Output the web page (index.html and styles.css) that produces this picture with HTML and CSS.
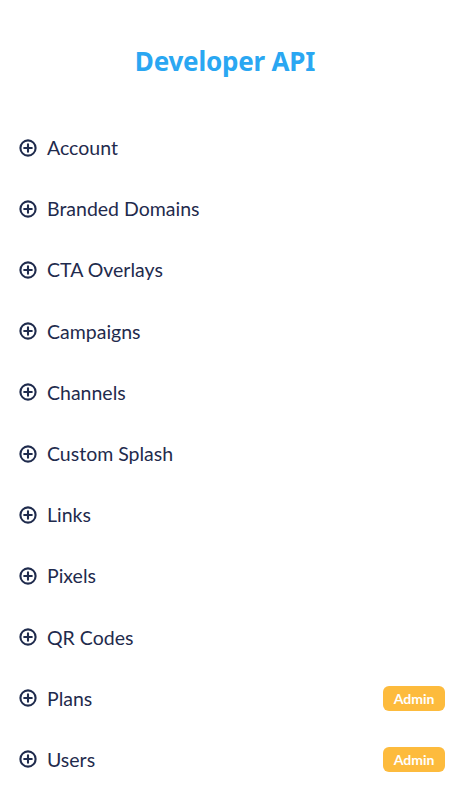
FILE: index.html
```html
<!DOCTYPE html>
<html>
<head>
<meta charset="utf-8">
<link rel="stylesheet" href="styles.css">
</head>
<body>
<div class="page">
  <h1 class="title">Developer API</h1>
  <ul class="menu">
    <li class="item"><svg class="icon" viewBox="0 0 18 18"><circle cx="9" cy="9" r="7.6"/><path d="M9 5.2v7.6M5.2 9h7.6"/></svg><span class="label">Account</span></li>
    <li class="item"><svg class="icon" viewBox="0 0 18 18"><circle cx="9" cy="9" r="7.6"/><path d="M9 5.2v7.6M5.2 9h7.6"/></svg><span class="label">Branded Domains</span></li>
    <li class="item"><svg class="icon" viewBox="0 0 18 18"><circle cx="9" cy="9" r="7.6"/><path d="M9 5.2v7.6M5.2 9h7.6"/></svg><span class="label">CTA Overlays</span></li>
    <li class="item"><svg class="icon" viewBox="0 0 18 18"><circle cx="9" cy="9" r="7.6"/><path d="M9 5.2v7.6M5.2 9h7.6"/></svg><span class="label">Campaigns</span></li>
    <li class="item"><svg class="icon" viewBox="0 0 18 18"><circle cx="9" cy="9" r="7.6"/><path d="M9 5.2v7.6M5.2 9h7.6"/></svg><span class="label">Channels</span></li>
    <li class="item"><svg class="icon" viewBox="0 0 18 18"><circle cx="9" cy="9" r="7.6"/><path d="M9 5.2v7.6M5.2 9h7.6"/></svg><span class="label">Custom Splash</span></li>
    <li class="item"><svg class="icon" viewBox="0 0 18 18"><circle cx="9" cy="9" r="7.6"/><path d="M9 5.2v7.6M5.2 9h7.6"/></svg><span class="label">Links</span></li>
    <li class="item"><svg class="icon" viewBox="0 0 18 18"><circle cx="9" cy="9" r="7.6"/><path d="M9 5.2v7.6M5.2 9h7.6"/></svg><span class="label">Pixels</span></li>
    <li class="item"><svg class="icon" viewBox="0 0 18 18"><circle cx="9" cy="9" r="7.6"/><path d="M9 5.2v7.6M5.2 9h7.6"/></svg><span class="label">QR Codes</span></li>
    <li class="item"><svg class="icon" viewBox="0 0 18 18"><circle cx="9" cy="9" r="7.6"/><path d="M9 5.2v7.6M5.2 9h7.6"/></svg><span class="label">Plans</span><span class="badge">Admin</span></li>
    <li class="item"><svg class="icon" viewBox="0 0 18 18"><circle cx="9" cy="9" r="7.6"/><path d="M9 5.2v7.6M5.2 9h7.6"/></svg><span class="label">Users</span><span class="badge">Admin</span></li>
  </ul>
</div>
</body>
</html>
```
FILE: styles.css
```css
* { box-sizing: border-box; }
html, body { margin: 0; padding: 0; background: #fff; }
body { font-family: Lato, "Noto Sans", sans-serif; }
.page { width: 450px; padding: 43px 5px 0 19px; }
.title {
  margin: 0 0 0 -14px;
  text-align: center;
  font-family: "Noto Sans", sans-serif;
  font-weight: 700;
  font-size: 26px;
  line-height: 36px;
  color: #2aa7f2;
  letter-spacing: -0.2px;
}
.menu { list-style: none; margin: 38px 0 0; padding: 0; }
.item {
  display: flex;
  align-items: center;
  height: 61.2px;
  color: #1f2b4d;
}
.icon {
  width: 18px; height: 18px;
  fill: none;
  stroke: #1f2b4d;
  stroke-width: 2.1;
  stroke-linecap: round;
  flex: none;
}
.label { margin-left: 10px; font-size: 19.5px; flex: 1; }
.badge {
  background: #fdbb3d;
  color: #fff;
  font-weight: 700;
  font-size: 14px;
  height: 25px;
  width: 62px;
  border-radius: 6px;
  display: flex;
  align-items: center;
  justify-content: center;
}
```
